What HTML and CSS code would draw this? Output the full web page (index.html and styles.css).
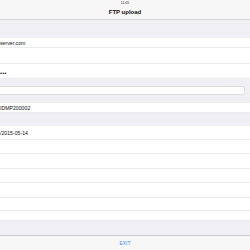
FILE: index.html
```html
<!DOCTYPE html>
<html lang="en">
<head>
    <meta charset="UTF-8">
    <meta name="viewport" content="width=device-width, initial-scale=1.0">
    <title>FTP upload</title>
    <link rel="stylesheet" href="styles.css">
</head>
<body>
    <div class="screen">
        <div class="navbar">
            <div class="status">11:05</div>
            <div class="title">FTP upload</div>
        </div>

        <div class="gap h18"></div>
        <div class="row h10">server.com</div>
        <div class="row h16"></div>
        <div class="row h15 dots">&bull;&bull;&bull;</div>

        <div class="gap h7"></div>
        <div class="field"><input type="text" class="input"></div>
        <div class="gap h8"></div>

        <div class="row h10">IDMP200002</div>
        <div class="gap h13"></div>
        <div class="row h14">/2015-05-14</div>
        <div class="row h14"></div>
        <div class="row h15"></div>
        <div class="row h14"></div>
        <div class="row h15"></div>
        <div class="row h13"></div>
        <div class="row h10"></div>
        <div class="gap h14"></div>

        <div class="toolbar">
            <button class="exit">EXIT</button>
        </div>
    </div>
</body>
</html>
```

FILE: styles.css
```css
body {
    margin: 0;
    padding: 0;
    font-family: "Liberation Sans", Arial, sans-serif;
    background: #efeff4;
}

.screen {
    width: 250px;
    height: 250px;
    display: flex;
    flex-direction: column;
    overflow: hidden;
}

.navbar {
    height: 20px;
    flex-shrink: 0;
    background: #f7f7f7;
    border-bottom: 1px solid #d4d4d6;
    box-sizing: border-box;
    display: flex;
    flex-direction: column;
    align-items: center;
}

.status {
    font-size: 3.5px;
    color: #222;
    margin-top: 1px;
    height: 5px;
    line-height: 5px;
}

.title {
    font-size: 6px;
    font-weight: bold;
    color: #111;
    margin-top: 3px;
}

.gap {
    background: #efeff4;
    flex-shrink: 0;
}

.row {
    background: #fff;
    border-bottom: 1px solid #ececee;
    box-sizing: border-box;
    flex-shrink: 0;
    display: flex;
    align-items: center;
    font-size: 5.2px;
    color: #111;
    white-space: nowrap;
}

.dots {
    font-size: 5.5px;
    letter-spacing: 0.3px;
    align-items: flex-end;
    padding-bottom: 2px;
}

.h7 { height: 7px; }
.h8 { height: 8px; }
.h10 { height: 10px; }
.h13 { height: 13px; }
.h14 { height: 14px; }
.h15 { height: 15px; }
.h16 { height: 16px; }
.h18 { height: 18px; }

.field {
    height: 9px;
    flex-shrink: 0;
    display: flex;
    padding-right: 5px;
}

.input {
    flex: 1;
    margin-left: -4px;
    height: 9px;
    box-sizing: border-box;
    border: 1px solid #dcdcdc;
    border-radius: 2px;
    background: #fff;
    padding: 0;
}

.toolbar {
    height: 15px;
    flex-shrink: 0;
    box-sizing: border-box;
    background: #f7f7f7;
    border-top: 1px solid #cfcfd1;
    display: flex;
    align-items: center;
    justify-content: center;
}

.exit {
    background: none;
    border: none;
    padding: 0;
    font-family: inherit;
    font-size: 5px;
    color: #3e8ff0;
}
```
